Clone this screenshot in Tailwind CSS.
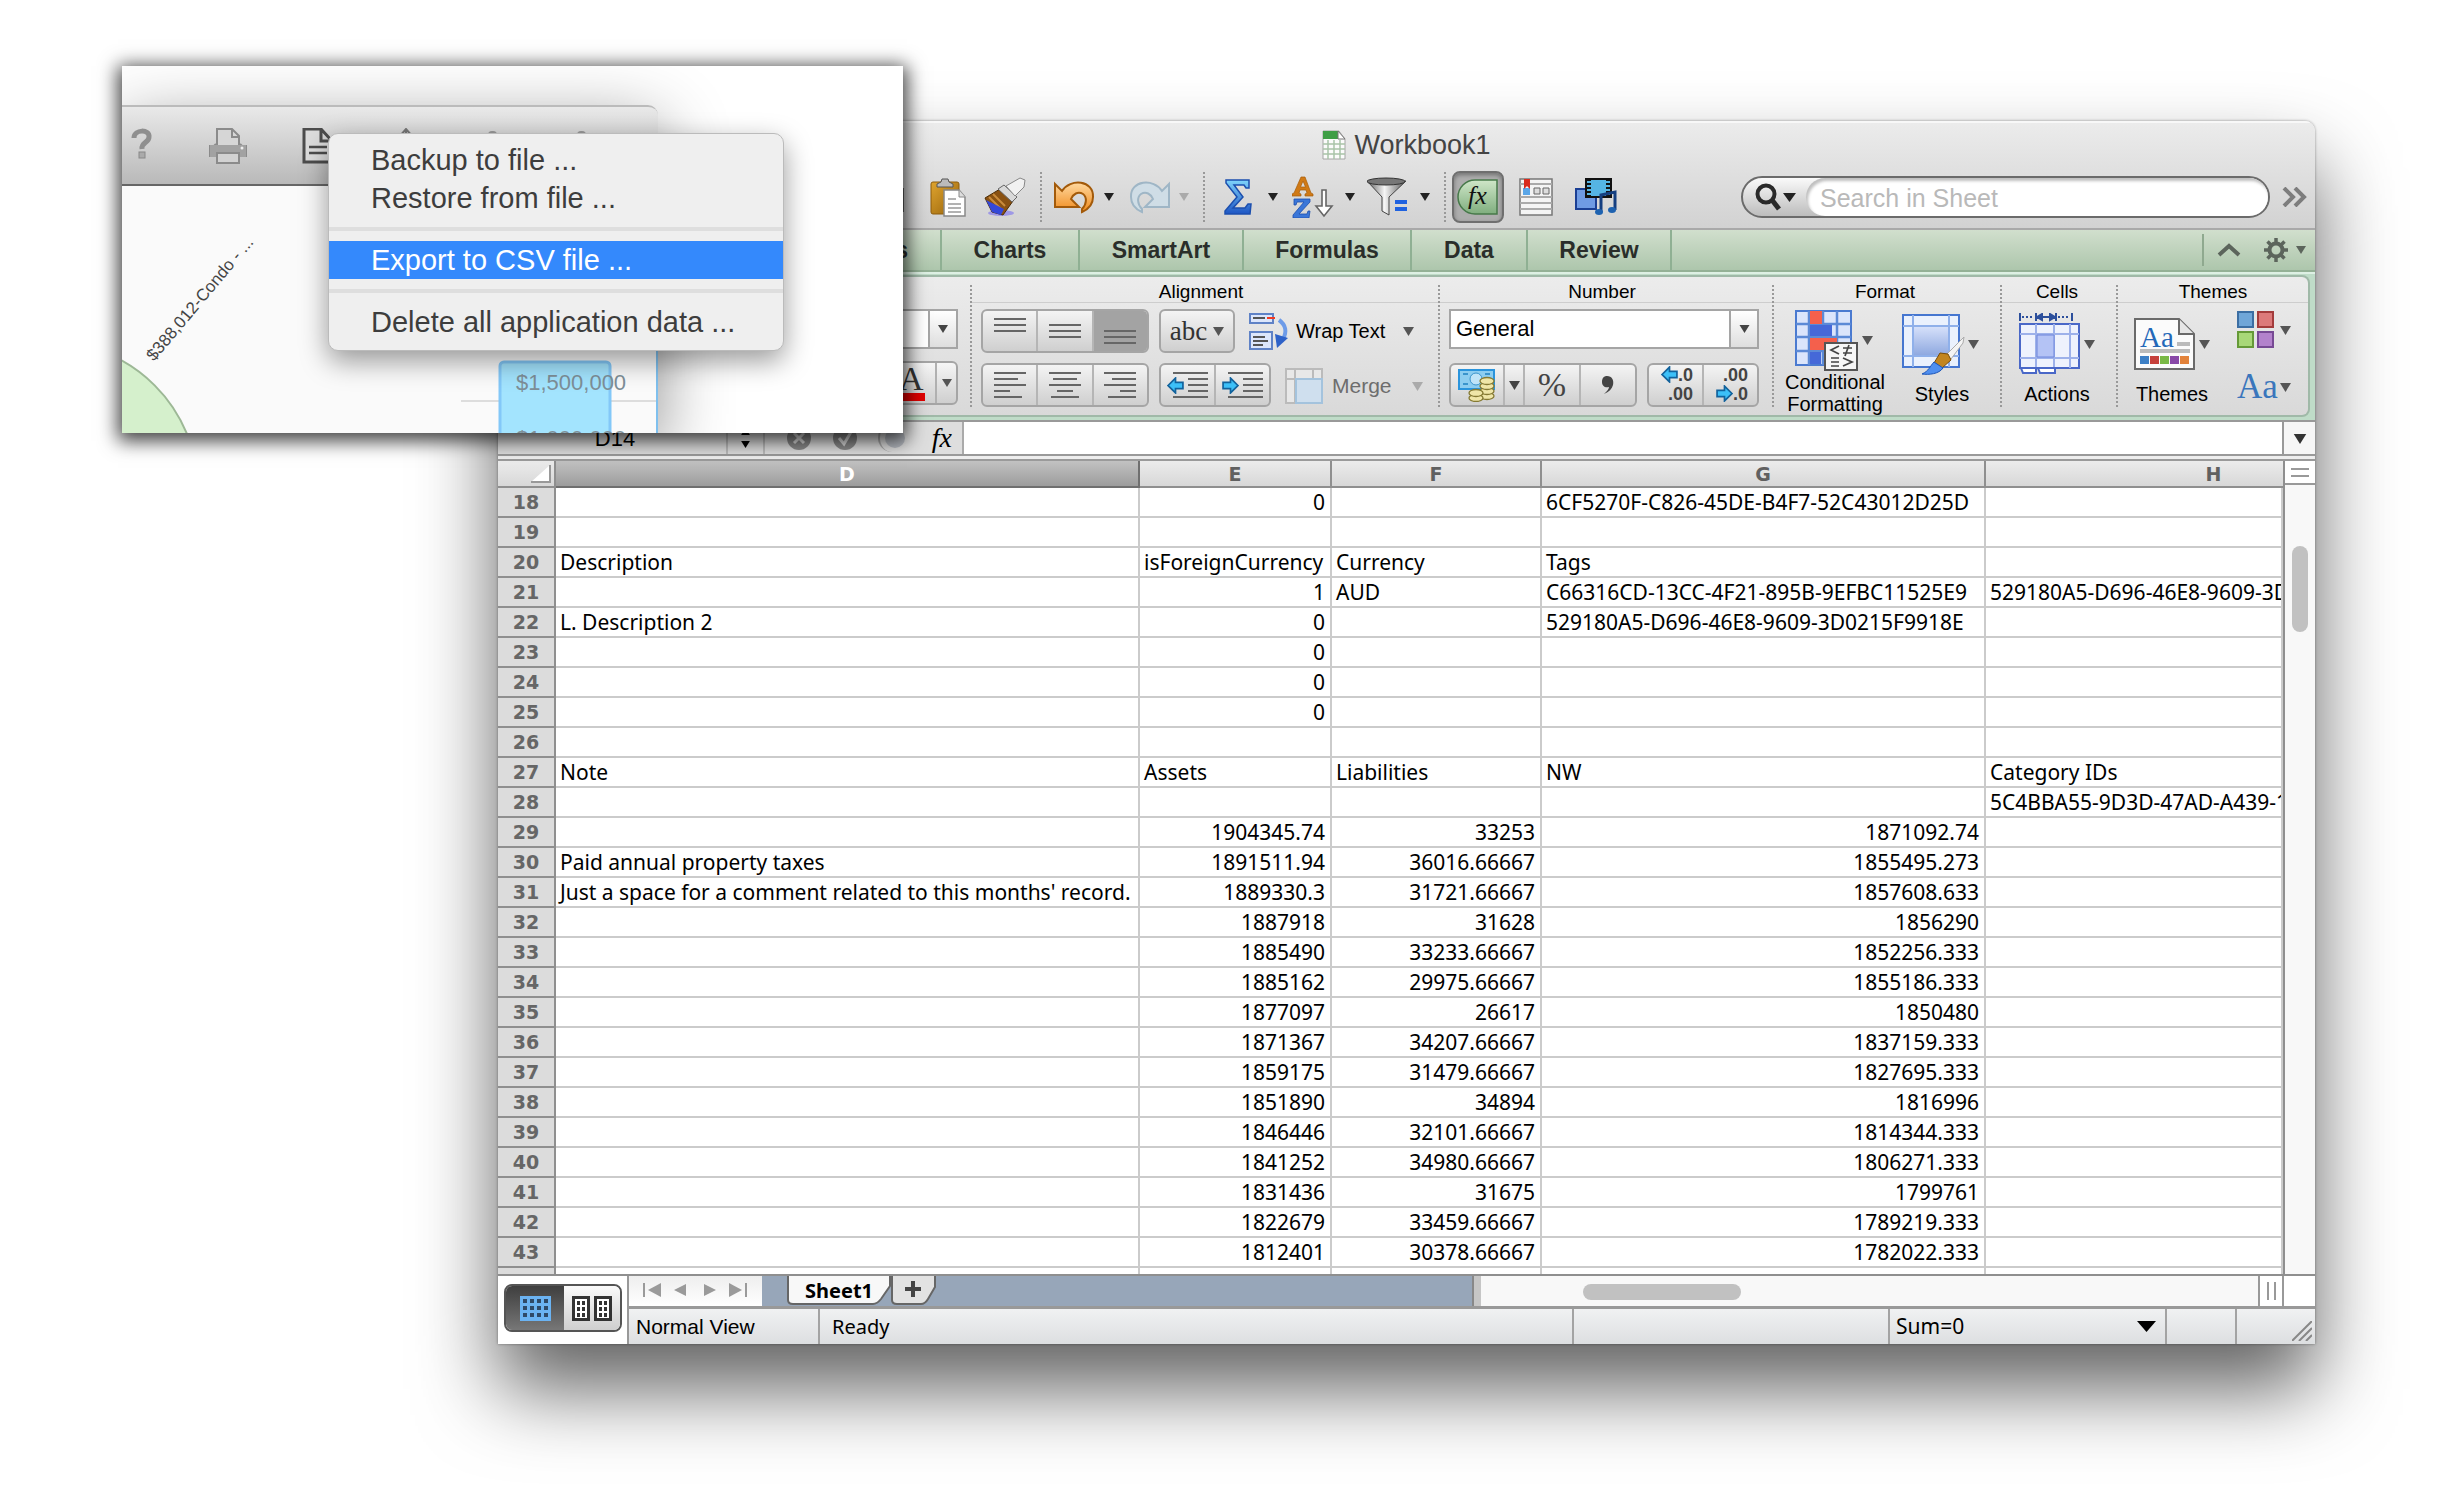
<!DOCTYPE html>
<html lang="en">
<head>
<meta charset="utf-8">
<title>Workbook1</title>
<script src="https://cdn.jsdelivr.net/npm/@tailwindcss/browser@4"></script>
</head>
<body class="relative min-h-screen overflow-x-hidden bg-white pt-[121px] pr-[131px] pb-[164px] pl-[498px] font-['Liberation_Sans',sans-serif] text-black">

<svg class="absolute h-0 w-0" aria-hidden="true">
  <defs>
    <symbol id="caret" viewBox="0 0 10 8"><path d="M0 0h10L5 8z" fill="currentColor"/></symbol>
    <linearGradient id="gOrange" x1="0" y1="0" x2="0" y2="1"><stop offset="0" stop-color="#ffd9a0"/><stop offset="1" stop-color="#f08a1c"/></linearGradient>
    <linearGradient id="gBlue" x1="0" y1="0" x2="0" y2="1"><stop offset="0" stop-color="#7fd4fb"/><stop offset="1" stop-color="#1d55c4"/></linearGradient>
    <linearGradient id="gSteel" x1="0" y1="0" x2="1" y2="0"><stop offset="0" stop-color="#5c5c5c"/><stop offset=".45" stop-color="#f6f6f6"/><stop offset="1" stop-color="#555"/></linearGradient>
    <linearGradient id="gClip" x1="0" y1="0" x2="1" y2="1"><stop offset="0" stop-color="#e0a52f"/><stop offset="1" stop-color="#95610a"/></linearGradient>
    <linearGradient id="gGreen" x1="0" y1="0" x2="0" y2="1"><stop offset="0" stop-color="#cfe6c8"/><stop offset="1" stop-color="#7fae7e"/></linearGradient>
    <linearGradient id="gCell" x1="0" y1="0" x2="0" y2="1"><stop offset="0" stop-color="#d5e0fa"/><stop offset="1" stop-color="#8fa9e0"/></linearGradient>
    <symbol id="arrowL" viewBox="0 0 16 16"><path d="M1 8l7-7v4h7v6H8v4z" fill="#3cc0f8" stroke="#12629c" stroke-width="1.6"/></symbol>
    <symbol id="arrowR" viewBox="0 0 16 16"><path d="M15 8L8 1v4H1v6h7v4z" fill="#3cc0f8" stroke="#12629c" stroke-width="1.6"/></symbol>
  </defs>
</svg>

<main class="overflow-hidden rounded-t-[10px] bg-white shadow-[0_0_3px_rgba(0,0,0,0.4),0_45px_80px_rgba(0,0,0,0.62)]">

  <header class="h-[109px] border-b-2 border-[#a9a9a9] bg-linear-to-b from-[#ececec] to-[#d2d2d2] shadow-[inset_0_2px_0_#f8f8f8]">
    <h1 class="flex h-[48px] items-center justify-center gap-2 text-[27px] leading-[30px] text-[#444]">
      <svg class="h-[30px] w-[24px]" viewBox="0 0 24 30"><path d="M1 1h16l6 8v20H1z" fill="#fbfbfb" stroke="#a5a5a5"/><path d="M1 1h15v8H1z" fill="#3f9e46"/><path d="M16 1l7 8h-7z" fill="#fff" stroke="#777"/><path d="M1 14h22M1 19h22M1 24h22M6 10v19M12 10v19M18 10v19" stroke="#a9c4a8" stroke-width="1.5"/></svg>
      Workbook1
    </h1>
    <div class="flex h-[56px] items-center pl-[392px]">
      <button aria-label="Copy" class="w-[40px]"><svg class="h-[40px] w-[15px]" viewBox="0 0 15 40"><path d="M0 12h13v22H0" fill="#fff" stroke="#666" stroke-width="2"/></svg></button>
      <button aria-label="Paste" class="w-[54px]"><svg class="h-[40px] w-[36px]" viewBox="0 0 36 40"><rect x="1" y="5" width="28" height="32" rx="2" fill="url(#gClip)" stroke="#8d5c0c"/><path d="M7 10V7l4-2 1-3h6l1 3 4 2v3z" fill="#bbb" stroke="#555"/><path d="M14 13h15l6 7v19H14z" fill="#fff" stroke="#888" stroke-width="1.5"/><path d="M29 13v7h6" fill="#ddd" stroke="#888"/><path d="M18 22h8M18 27h13M18 31h13M18 35h13" stroke="#999" stroke-width="1.6"/></svg></button>
      <button aria-label="Format painter" class="w-[56px]"><svg class="h-[40px] w-[42px]" viewBox="0 0 42 40"><ellipse cx="17" cy="36" rx="13" ry="3" fill="#7a6ff0" opacity=".6"/><path d="M1 21l15-9 13 12-10 14-11-3z" fill="#8a5212" stroke="#4d2d06"/><path d="M5 20l12 12M9 17l12 12" stroke="#c98b3b" stroke-width="2"/><path d="M2 23l18 9-3 6-9-3z" fill="#3448d8"/><path d="M14 12l6-4 13 12-5 5z" fill="#d9d9d9" stroke="#666"/><path d="M22 9L36 1l5 2-1 7-9 9z" fill="#f1f1f1" stroke="#888"/></svg></button>
      <span class="h-[50px] w-[13px] border-l-2 border-dotted border-[#999]"></span>
      <button aria-label="Undo" class="w-[51px]"><svg class="h-[34px] w-[42px]" viewBox="0 0 42 34"><path d="M2 4l7 7C17-2 41 0 40 17c0 8-4 12-11 15v-3c5-5 5-12 1-15-5-3-10 0-12 5l8 8H2z" fill="url(#gOrange)" stroke="#a35a0a" stroke-width="2"/></svg></button>
      <svg class="h-[8px] w-[10px] text-[#222]"><use href="#caret"/></svg>
      <button aria-label="Redo" class="ml-[15px] w-[50px]"><svg class="h-[34px] w-[42px]" viewBox="0 0 42 34"><path d="M40 4l-7 7C25-2 1 0 2 17c0 8 4 12 11 15v-3c-5-5-5-12-1-15 5-3 10 0 12 5l-8 8h24z" fill="#cfdde6" stroke="#9fb6c6" stroke-width="2"/></svg></button>
      <svg class="h-[8px] w-[10px] text-[#aaa]"><use href="#caret"/></svg>
      <span class="ml-[14px] h-[50px] w-[21px] border-l-2 border-dotted border-[#999]"></span>
      <button aria-label="AutoSum" class="w-[44px]"><svg class="h-[36px] w-[28px]" viewBox="0 0 28 36"><path d="M2 1h23v8h-3l-2-3H10l9 12-10 11h12l3-4h3l-1 10H1v-3l12-14L2 4z" fill="url(#gBlue)" stroke="#1c4fae" stroke-width="1.5"/></svg></button>
      <svg class="h-[8px] w-[10px] text-[#222]"><use href="#caret"/></svg>
      <button aria-label="Sort" class="ml-[14px] w-[53px]"><svg class="h-[42px] w-[42px]" viewBox="0 0 42 42"><path fill-rule="evenodd" d="M0 20v-2l2-1L9 1h4l6 16 2 1v2h-8v-2l2-1-1-3H8l-1 3 2 1v2zM8.500 11h5L11 5z" fill="#d07a16" stroke="#a85b08" stroke-width=".7"/><path d="M2 23h16v3L7 38h8l1-3h2l-1 7H1v-3l11-13H5l-1 3H2z" fill="#3a76d8" stroke="#1c4fae" stroke-width=".8"/><path d="M30 14h4v16h6l-8 10-8-10h6z" fill="#fff" stroke="#666" stroke-width="1.6"/></svg></button>
      <svg class="h-[8px] w-[10px] text-[#222]"><use href="#caret"/></svg>
      <button aria-label="Filter" class="ml-[11px] w-[54px]"><svg class="h-[40px] w-[42px]" viewBox="0 0 42 40"><path d="M1 4l15 16v14l7 4V20L40 4z" fill="url(#gSteel)" stroke="#444"/><ellipse cx="20" cy="4.500" rx="19" ry="3.500" fill="#777" stroke="#333"/><path d="M29 25h12M29 32h12" stroke="#1f62e0" stroke-width="4"/></svg></button>
      <svg class="h-[8px] w-[10px] text-[#222]"><use href="#caret"/></svg>
      <span class="ml-[14px] h-[50px] w-[8px] border-l-2 border-dotted border-[#999]"></span>
      <button aria-label="Formula builder" class="flex h-[52px] w-[52px] items-center justify-center rounded-lg border-2 border-[#6f6f6f] bg-[#adadad] shadow-[inset_0_2px_4px_rgba(0,0,0,0.35)]"><svg class="h-[36px] w-[42px]" viewBox="0 0 42 36"><path d="M18 1h22v34H18a17 17 0 010-34z" fill="url(#gGreen)" stroke="#47794a" stroke-width="1.5"/><text x="11" y="25" font-family="Liberation Serif, serif" font-style="italic" font-size="26" fill="#111">fx</text></svg></button>
      <button aria-label="Toolbox" class="ml-[15px] w-[56px]"><svg class="h-[38px] w-[34px]" viewBox="0 0 34 38"><rect x="1" y="1" width="32" height="36" fill="#f4f4f4" stroke="#777" stroke-width="1.5"/><path d="M1 6h32M1 19h32M1 25h32M1 31h32" stroke="#aaa" stroke-width="2"/><path d="M4 10h7v7H4z" fill="#5aa6e8"/><path d="M5 1h6v10l-3-3-3 3z" fill="#d92a1c"/><path d="M15 10h6v6h-6zM24 10h6v6h-6z" fill="#ddd" stroke="#666"/></svg></button>
      <button aria-label="Media browser"><svg class="h-[38px] w-[42px]" viewBox="0 0 42 38"><rect x="1" y="11" width="20" height="20" fill="#6f9be4" stroke="#1b3f94" stroke-width="2"/><rect x="11" y="1" width="25" height="18" fill="#55b4e4" stroke="#111" stroke-width="2"/><path d="M14 1v18M33 1v18" stroke="#111" stroke-width="4" stroke-dasharray="2 2"/><path d="M26 34V17l14-3v18" fill="none" stroke="#153f80" stroke-width="3"/><ellipse cx="24" cy="34" rx="4" ry="3" fill="#1e62b0"/><ellipse cx="37" cy="32" rx="4" ry="3" fill="#1e62b0"/></svg></button>
      <div class="mr-[12px] ml-auto flex h-[42px] w-[529px] items-center rounded-full border-2 border-[#6b6b6b] bg-linear-to-b from-[#fafafa] to-[#bdbdbd]">
        <label for="q" class="flex w-[63px] items-center gap-[2px] pl-[12px]"><svg class="h-[28px] w-[26px]" viewBox="0 0 26 28"><circle cx="11" cy="11" r="8.500" fill="none" stroke="#2a2a2a" stroke-width="4"/><path d="M17 17l7 9" stroke="#2a2a2a" stroke-width="5"/></svg><svg class="h-[9px] w-[13px] text-[#222]" viewBox="0 0 10 8" preserveAspectRatio="none"><path d="M0 0h10L5 8z" fill="currentColor"/></svg></label>
        <input id="q" type="search" placeholder="Search in Sheet" class="h-[38px] min-w-0 flex-1 rounded-full bg-white pt-[2px] pl-[14px] text-[25px] shadow-[inset_2px_3px_3px_rgba(0,0,0,0.25)] outline-none placeholder:text-[#b9b9b9]">
      </div>
      <button aria-label="More" class="mr-[6px] w-[27px]"><svg class="h-[20px] w-[26px]" viewBox="0 0 26 20"><path d="M2 1l9 9-9 9M13 1l9 9-9 9" fill="none" stroke="#7d7d7d" stroke-width="4"/></svg></button>
    </div>
  </header>

  <nav class="flex h-[42px] items-stretch border-b-2 border-[#94b196] bg-linear-to-b from-[#d1dfcd] to-[#adc6ac] text-[23px] leading-[40px] font-bold text-[#2a2e2a]">
    <a href="#" class="w-[444px] border-r-2 border-[#8fb093] pr-[32px] text-right">Tables</a>
    <a href="#" class="w-[138px] border-r-2 border-[#8fb093] text-center">Charts</a>
    <a href="#" class="w-[164px] border-r-2 border-[#8fb093] text-center">SmartArt</a>
    <a href="#" class="w-[168px] border-r-2 border-[#8fb093] text-center">Formulas</a>
    <a href="#" class="w-[116px] border-r-2 border-[#8fb093] text-center">Data</a>
    <a href="#" class="w-[144px] border-r-2 border-[#8fb093] text-center">Review</a>
    <div class="my-1 ml-auto flex items-center border-l-2 border-[#8fa98f] pr-[9px] pl-[13px] text-[#5c655c]">
      <button aria-label="Collapse ribbon"><svg class="h-[14px] w-[24px]" viewBox="0 0 24 14"><path d="M2 12L12 3l10 9" fill="none" stroke="currentColor" stroke-width="4"/></svg></button>
      <button aria-label="Ribbon settings" class="ml-[23px] flex items-center gap-[8px]"><svg class="h-[24px] w-[24px]" viewBox="0 0 24 24"><circle cx="12" cy="12" r="6.500" fill="none" stroke="currentColor" stroke-width="4"/><path d="M12 0v5M12 19v5M0 12h5M19 12h5M3.500 3.500l4 4M16.500 16.500l4 4M3.500 20.500l4-4M16.500 7.500l4-4" stroke="currentColor" stroke-width="3.500"/></svg><svg class="h-[8px] w-[10px]"><use href="#caret"/></svg></button>
    </div>
  </nav>

  <section class="h-[150px] border-b-2 border-[#999] bg-[#bfdcc8] pt-[3px] pr-[5px] pb-[3px] shadow-[inset_0_2px_0_#def0e4]">
    <div class="flex h-[142px] rounded-r-lg border-y-2 border-r-2 border-[#a0b9a8] bg-linear-to-b from-[#ececec] to-[#d9d9d9] text-[20px] leading-[22px]">

      <div class="flex w-[472px] shrink-0 flex-col items-end gap-[12px] pt-[32px] pr-[12px]">
        <div class="flex h-[40px] w-[100px] border-2 border-[#a5a5a5] bg-white"><button aria-label="Font size" class="ml-auto flex w-[28px] items-center justify-center border-l-2 border-[#a5a5a5] bg-linear-to-b from-white to-[#dedede] text-[#444]"><svg class="h-[8px] w-[10px]"><use href="#caret"/></svg></button></div>
        <div class="flex h-[44px] rounded-md border-2 border-[#a5a5a5] bg-linear-to-b from-[#f6f6f6] to-[#cfcfcf]">
          <button class="w-[44px] pl-[8px] text-left"><span class="block w-[26px] border-b-8 border-[#e00000] font-['Liberation_Serif',serif] text-[34px] leading-[28px] text-[#333]">A</span></button>
          <button aria-label="Font colour options" class="flex w-[21px] items-center justify-center border-l-2 border-[#b0b0b0] text-[#555]"><svg class="h-[8px] w-[10px]"><use href="#caret"/></svg></button>
        </div>
      </div>

      <div class="my-2 flex w-[468px] shrink-0 flex-col border-l-2 border-dotted border-[#999]">
        <h2 class="-mt-1 h-[22px] border-b border-[#cdcdcd] pr-[8px] text-center text-[19px]">Alignment</h2>
        <div class="mt-[6px] flex items-center pl-[9px]">
          <div class="flex h-[44px] w-[168px] divide-x-2 divide-[#b5b5b5] overflow-hidden rounded-md border-2 border-[#a5a5a5] bg-linear-to-b from-[#f4f4f4] to-[#cfcfcf]">
            <button aria-label="Align top" class="flex flex-1 justify-center pt-[6px]"><svg class="h-[18px] w-[32px]" viewBox="0 0 32 18"><path d="M0 2h32M0 8h32M0 14h32" stroke="#666" stroke-width="2"/></svg></button>
            <button aria-label="Align middle" class="flex flex-1 justify-center pt-[12px]"><svg class="h-[18px] w-[32px]" viewBox="0 0 32 18"><path d="M0 2h32M0 8h32M0 14h32" stroke="#666" stroke-width="2"/></svg></button>
            <button aria-label="Align bottom" class="flex flex-1 justify-center bg-[#a3a3a3] pt-[18px]"><svg class="h-[18px] w-[32px]" viewBox="0 0 32 18"><path d="M0 2h32M0 8h32M0 14h32" stroke="#666" stroke-width="2"/></svg></button>
          </div>
          <button class="ml-[10px] flex h-[44px] w-[76px] items-center justify-center gap-[6px] rounded-md border-2 border-[#a5a5a5] bg-linear-to-b from-[#f4f4f4] to-[#cfcfcf] font-['Liberation_Serif',serif] text-[27px] text-[#333]">abc<svg class="h-[9px] w-[11px] text-[#555]"><use href="#caret"/></svg></button>
          <button class="ml-[14px] flex items-center gap-[7px]"><svg class="h-[38px] w-[40px]" viewBox="0 0 40 38"><path d="M1 2h23v9H1zM1 20h22v17H1z" fill="#dce6fb" stroke="#5f82c6" stroke-width="2"/><path d="M4 6h12M4 25h12M4 29h15M4 33h10" stroke="#555" stroke-width="2"/><path d="M18 6h8" stroke="#f23a22" stroke-width="2"/><path d="M30 8c7 5 8 12 4 19" fill="none" stroke="#6d9be8" stroke-width="4"/><path d="M26 22l13 4-11 10z" fill="#2e62c8"/></svg>Wrap Text<svg class="ml-[11px] h-[9px] w-[11px] text-[#555]"><use href="#caret"/></svg></button>
        </div>
        <div class="mt-[10px] flex items-center pl-[9px]">
          <div class="flex h-[44px] w-[168px] divide-x-2 divide-[#b5b5b5] rounded-md border-2 border-[#a5a5a5] bg-linear-to-b from-[#f4f4f4] to-[#cfcfcf]">
            <button aria-label="Align left" class="flex flex-1 items-center justify-center"><svg class="h-[28px] w-[32px]" viewBox="0 0 32 28"><path d="M0 2h32M0 8h24M0 14h32M0 20h16M0 26h28" stroke="#666" stroke-width="2"/></svg></button>
            <button aria-label="Align centre" class="flex flex-1 items-center justify-center"><svg class="h-[28px] w-[32px]" viewBox="0 0 32 28"><path d="M0 2h32M4 8h24M0 14h32M8 20h16M2 26h28" stroke="#666" stroke-width="2"/></svg></button>
            <button aria-label="Align right" class="flex flex-1 items-center justify-center"><svg class="h-[28px] w-[32px]" viewBox="0 0 32 28"><path d="M0 2h32M8 8h24M0 14h32M16 20h16M4 26h28" stroke="#666" stroke-width="2"/></svg></button>
          </div>
          <div class="ml-[10px] flex h-[44px] w-[112px] divide-x-2 divide-[#b5b5b5] rounded-md border-2 border-[#a5a5a5] bg-linear-to-b from-[#f4f4f4] to-[#cfcfcf]">
            <button aria-label="Decrease indent" class="flex flex-1 items-center justify-center"><svg class="h-[28px] w-[42px]" viewBox="0 0 42 28"><path d="M6 2h35M21 8h20M21 14h20M21 20h20M6 26h35" stroke="#666" stroke-width="2"/><use href="#arrowL" x="0" y="6" width="17" height="17"/></svg></button>
            <button aria-label="Increase indent" class="flex flex-1 items-center justify-center"><svg class="h-[28px] w-[42px]" viewBox="0 0 42 28"><path d="M6 2h35M21 8h20M21 14h20M21 20h20M6 26h35" stroke="#666" stroke-width="2"/><use href="#arrowR" x="0" y="6" width="17" height="17"/></svg></button>
          </div>
          <button class="ml-[14px] flex items-center gap-[9px] pt-[2px] text-[21px] text-[#6d6d6d]"><svg class="h-[36px] w-[38px]" viewBox="0 0 38 36"><rect x="1" y="1" width="36" height="34" fill="#e8e8e8" stroke="#bbb" stroke-width="2"/><path d="M10 1v34M28 1v10M1 11h36" stroke="#bbb" stroke-width="2"/><rect x="11" y="11" width="26" height="24" fill="#cfdfee" stroke="#a4c3dd" stroke-width="2"/></svg>Merge<svg class="ml-[11px] h-[9px] w-[11px] text-[#aaa]"><use href="#caret"/></svg></button>
        </div>
      </div>

      <div class="my-2 flex w-[334px] shrink-0 flex-col border-l-2 border-dotted border-[#999]">
        <h2 class="-mt-1 h-[22px] border-b border-[#cdcdcd] pr-[8px] text-center text-[19px]">Number</h2>
        <div class="relative mt-[6px] ml-[9px] w-[310px]">
          <select aria-label="Number format" class="block h-[40px] w-full appearance-none border-2 border-[#a5a5a5] bg-white pl-[5px] text-[22px] leading-[22px]"><option>General</option></select>
          <span class="pointer-events-none absolute inset-y-[2px] right-[2px] flex w-[28px] items-center justify-center border-l-2 border-[#a5a5a5] bg-linear-to-b from-white to-[#dedede] text-[#444]"><svg class="h-[8px] w-[11px]"><use href="#caret"/></svg></span>
        </div>
        <div class="mt-[14px] ml-[9px] flex gap-[10px] text-[#444]">
          <div class="flex h-[44px] w-[188px] divide-x-2 divide-[#b5b5b5] rounded-md border-2 border-[#a5a5a5] bg-linear-to-b from-[#f4f4f4] to-[#cfcfcf]">
            <button aria-label="Currency" class="flex w-[54px] items-center justify-center"><svg class="h-[34px] w-[38px]" viewBox="0 0 38 34"><rect x="1" y="2" width="35" height="19" fill="#8ccdf0" stroke="#2a94dc" stroke-width="2"/><circle cx="18" cy="11" r="6" fill="#bfe4f8" stroke="#3a94cc"/><path d="M5 6h5M5 16h5M27 6h5" stroke="#3a94cc" stroke-width="2"/><g fill="#efe6a8" stroke="#857a33" stroke-width="1.300"><ellipse cx="29" cy="28" rx="7" ry="3.500"/><ellipse cx="29" cy="23" rx="7" ry="3.500"/><ellipse cx="29" cy="18" rx="7" ry="3.500"/><ellipse cx="29" cy="13" rx="7" ry="3.500"/><ellipse cx="18" cy="30" rx="7" ry="3.500"/><ellipse cx="18" cy="25" rx="7" ry="3.500"/></g></svg></button>
            <button aria-label="Currency options" class="flex w-[20px] items-center justify-center"><svg class="h-[9px] w-[11px]"><use href="#caret"/></svg></button>
            <button class="w-[56px] font-['Liberation_Serif',serif] text-[34px]">%</button>
            <button aria-label="Comma style" class="flex flex-1 items-center justify-center"><svg class="h-[20px] w-[14px]" viewBox="0 0 14 20"><path d="M6 1c5 0 7 4 6 9-1 4-4 7-9 9 3-3 5-5 5-7-4 1-7-1-7-5 0-4 2-6 5-6z" fill="#444"/></svg></button>
          </div>
          <div class="flex h-[44px] w-[112px] divide-x-2 divide-[#b5b5b5] rounded-md border-2 border-[#a5a5a5] bg-linear-to-b from-[#f4f4f4] to-[#cfcfcf] text-[18px] leading-[19px] font-bold">
            <button class="flex flex-1 flex-col items-end justify-center pr-[9px]"><span class="flex"><svg class="h-[17px] w-[17px]"><use href="#arrowL"/></svg>.0</span><span>.00</span></button>
            <button class="flex flex-1 flex-col items-end justify-center pr-[9px]"><span>.00</span><span class="flex"><svg class="h-[17px] w-[17px]"><use href="#arrowR"/></svg>.0</span></button>
          </div>
        </div>
      </div>

      <div class="my-2 flex w-[228px] shrink-0 flex-col border-l-2 border-dotted border-[#999]">
        <h2 class="-mt-1 h-[22px] border-b border-[#cdcdcd] pr-[4px] text-center text-[19px]">Format</h2>
        <div class="mt-[6px] flex">
          <button class="flex w-[122px] flex-col items-center text-[20px] leading-[22px]">
            <span class="flex items-center gap-[2px] pr-[4px] text-[#555]"><svg class="h-[62px] w-[66px]" viewBox="0 0 66 62"><rect x="2" y="2" width="55" height="54" fill="#dbe5fb" stroke="#4a7ad0" stroke-width="2"/><path d="M2 15h55M2 28h55M2 42h55M15 2v54M29 2v54M43 2v54" stroke="#5c8ad6" stroke-width="2.500"/><path d="M16 2h12v13H16zM16 29h27v12H16z" fill="#f4604c"/><path d="M16 16h22v11H16zM16 43h11v12H16z" fill="#4568d8"/><rect x="31" y="34" width="32" height="27" fill="#f6f6f6" stroke="#555" stroke-width="2"/><path d="M45 37l-8 4 8 4M37 49h8M37 53h8M37 57h8M49 39h9M49 44h9M55 36l-4 11M49 49l9 4-9 4" fill="none" stroke="#444" stroke-width="1.700"/></svg><svg class="h-[9px] w-[11px]"><use href="#caret"/></svg></span>
            <span class="block whitespace-nowrap">Conditional<br>Formatting</span>
          </button>
          <button class="flex w-[96px] flex-col items-center">
            <span class="flex items-center gap-[1px] pt-[4px] pr-[8px] text-[#555]"><svg class="h-[62px] w-[66px]" viewBox="0 0 66 62"><rect x="2" y="2" width="56" height="52" fill="#eaf1fd" stroke="#4576d0" stroke-width="2"/><path d="M2 13h56M2 43h56M12 2v52M48 2v52" stroke="#8fb0ea" stroke-width="2"/><path d="M13 14h34v28H13z" fill="url(#gCell)"/><path d="M63 24L45 42l5 4 12-16z" fill="#f4f4f4" stroke="#aaa"/><path d="M39 40l8 1 3 6-9 8-8-5z" fill="#c2851f" stroke="#7a4d08"/><path d="M33 49l9 6c-4 6-14 7-21 6 7-3 8-8 12-12z" fill="#4f8ff0" stroke="#1b55b8"/></svg><svg class="h-[9px] w-[11px]"><use href="#caret"/></svg></span>
            <span class="mt-[8px] mr-[4px]">Styles</span>
          </button>
        </div>
      </div>

      <div class="my-2 flex w-[116px] shrink-0 flex-col border-l-2 border-dotted border-[#999]">
        <h2 class="-mt-1 h-[22px] border-b border-[#cdcdcd] pr-[4px] text-center text-[19px]">Cells</h2>
        <button class="mt-[6px] flex flex-col items-center">
          <span class="flex items-center gap-[1px] pt-[4px] pr-[6px] text-[#555]"><svg class="h-[62px] w-[66px]" viewBox="0 0 66 62"><path d="M3 0v8M55 0v8M19 4h20M19 0v8M39 0v8M20 4l5-3v6zM38 4l-5-3v6z" stroke="#2c4f9c" stroke-width="2" fill="#2c4f9c"/><path d="M5 4h12M41 4h12" stroke="#2c4f9c" stroke-width="2" stroke-dasharray="2 2"/><rect x="3" y="11" width="59" height="44" fill="#eef2fd" stroke="#4a68c8" stroke-width="2"/><path d="M3 21h59M3 45h59M19 11v44M37 11v44M53 11v44" stroke="#9db1ea" stroke-width="2"/><path d="M20 22h17v22H20z" fill="#b4c3f5" stroke="#6f86dc"/><path d="M4 55h15v5H6zM21 55h17v5H23z" fill="#fff" stroke="#4a68c8" stroke-width="2"/></svg><svg class="h-[9px] w-[11px]"><use href="#caret"/></svg></span>
          <span class="mt-[8px] mr-[4px]">Actions</span>
        </button>
      </div>

      <div class="my-2 flex min-w-0 flex-1 flex-col border-l-2 border-dotted border-[#999]">
        <h2 class="-mt-1 h-[22px] border-b border-[#cdcdcd] text-center text-[19px]">Themes</h2>
        <div class="mt-[6px] flex pl-[11px]">
          <button class="flex w-[90px] flex-col items-center">
            <span class="flex items-center gap-[3px] pt-[4px] pr-[6px] text-[#555]"><svg class="h-[62px] w-[64px]" viewBox="0 0 64 62"><path d="M3 6h44l15 15v35H3z" fill="#fbfbfb" stroke="#6a6a6a" stroke-width="2"/><path d="M47 6v15h15" fill="#e6e6e6" stroke="#6a6a6a" stroke-width="2"/><text x="8" y="34" font-family="Liberation Serif, serif" font-size="29" fill="#2468b8">Aa</text><path d="M45 31h13M8 38h50" stroke="#bbb" stroke-width="4"/><path d="M8 43h9v8H8z" fill="#3d80c6"/><path d="M18 43h9v8h-9z" fill="#c6403c"/><path d="M28 43h9v8h-9z" fill="#79b845"/><path d="M38 43h9v8h-9z" fill="#8848a8"/><path d="M48 43h9v8h-9z" fill="#e2823a"/></svg><svg class="h-[9px] w-[11px]"><use href="#caret"/></svg></span>
            <span class="mt-[8px] mr-[4px]">Themes</span>
          </button>
          <div class="ml-[18px] flex flex-col gap-[20px] pt-[2px] text-[#555]">
            <button aria-label="Theme colours" class="flex items-center gap-[5px]"><svg class="h-[38px] w-[38px]" viewBox="0 0 38 38"><g stroke-width="2"><path d="M1 1h15v15H1z" fill="#6fa6d8" stroke="#3b6ea3"/><path d="M21 1h15v15H21z" fill="#dc7a7a" stroke="#a33c3c"/><path d="M1 21h15v15H1z" fill="#a8d878" stroke="#659a38"/><path d="M21 21h15v15H21z" fill="#b382cc" stroke="#774a94"/></g></svg><svg class="h-[9px] w-[11px]"><use href="#caret"/></svg></button>
            <button aria-label="Theme fonts" class="flex items-center gap-[2px] font-['Liberation_Serif',serif] text-[35px] leading-[36px] text-[#3a76bc]">Aa<svg class="h-[9px] w-[11px] text-[#555]"><use href="#caret"/></svg></button>
          </div>
        </div>
      </div>
    </div>
  </section>

  <div class="flex h-[34px] border-b-2 border-[#9a9a9a] bg-[#dedede]">
    <input aria-label="Name box" value="D14" class="w-[230px] border-r-2 border-[#bbb] pr-[14px] pl-[20px] text-center text-[22px] outline-none">
    <button aria-label="Select name" class="flex w-[37px] flex-col items-center justify-center gap-[6px] border-r-2 border-[#bbb]"><svg class="h-[7px] w-[9px] rotate-180"><use href="#caret"/></svg><svg class="h-[7px] w-[9px]"><use href="#caret"/></svg></button>
    <div class="flex w-[197px] items-center gap-[20px] pl-[21px]">
      <button aria-label="Cancel"><svg class="h-[26px] w-[26px]" viewBox="0 0 26 26"><circle cx="13" cy="13" r="12" fill="#8a8a8a"/><path d="M8 8l10 10M18 8L8 18" stroke="#ddd" stroke-width="3"/></svg></button>
      <button aria-label="Enter"><svg class="h-[26px] w-[26px]" viewBox="0 0 26 26"><circle cx="13" cy="13" r="12" fill="#8a8a8a"/><path d="M7 13l5 6 7-12" fill="none" stroke="#ddd" stroke-width="3"/></svg></button>
      <button aria-label="Formula builder" class="flex h-[28px] w-[74px] items-center justify-between rounded-l-full border-l-2 border-[#aaa] pl-[5px] font-['Liberation_Serif',serif] text-[28px] leading-[26px] italic"><span class="h-[20px] w-[20px] rounded-full bg-[#b5b9c0]"></span>fx</button>
    </div>
    <input aria-label="Formula" class="min-w-0 flex-1 border-l-2 border-[#aaa] bg-white outline-none">
    <button aria-label="Expand formula bar" class="flex w-[33px] items-center justify-center border-l-2 border-[#999] bg-[#f6f6f6] pt-[2px] text-[#333]"><svg class="h-[10px] w-[14px]"><use href="#caret"/></svg></button>
  </div>
  <div class="h-[5px] border-b-2 border-[#9a9a9a] bg-[#eee]"></div>

  <div class="flex h-[815px] border-b-2 border-[#8f8f8f]">
    <div class="min-w-0 flex-1 overflow-hidden">
      <table class="w-full table-fixed border-separate border-spacing-0 font-['Noto_Sans',sans-serif] text-[21px] leading-[28px] whitespace-nowrap">
        <colgroup><col class="w-[58px]"><col class="w-[584px]"><col class="w-[192px]"><col class="w-[210px]"><col class="w-[444px]"><col></colgroup>
        <thead class="font-['DejaVu_Sans',sans-serif] text-[19px] leading-[24px] text-[#606060]">
          <tr class="h-[27px] bg-linear-to-b from-[#ececec] to-[#d6d6d6]">
            <td class="border-r-2 border-b-2 border-[#8f8f8f] p-0"><svg class="mr-[3px] ml-auto block h-[18px] w-[20px]" viewBox="0 0 20 18"><path d="M19 0v17H0z" fill="#fff"/><path d="M19 0v17H0" fill="none" stroke="#999" stroke-width="2"/></svg></td>
            <th scope="col" class="border-r-2 border-b-2 border-[#6f6f6f] bg-linear-to-b from-[#c2c2c2] to-[#9c9c9c] p-0 text-white">D</th>
            <th scope="col" class="border-r-2 border-b-2 border-[#8f8f8f] p-0">E</th>
            <th scope="col" class="border-r-2 border-b-2 border-[#8f8f8f] p-0">F</th>
            <th scope="col" class="border-r-2 border-b-2 border-[#8f8f8f] p-0">G</th>
            <th scope="col" class="border-b-2 border-[#8f8f8f] p-0 pl-[158px]">H</th>
          </tr>
        </thead>
        <tbody id="rows"></tbody>
      </table>
    </div>
    <div class="w-[32px] border-l-2 border-[#8f8f8f] bg-[#f8f8f8]">
      <div class="flex h-[24px] flex-col items-center justify-center gap-[5px] border-b-2 border-[#999] bg-white"><i class="h-[2px] w-[18px] bg-[#999]"></i><i class="h-[2px] w-[18px] bg-[#999]"></i></div>
      <div class="mt-[61px] ml-[7px] h-[86px] w-[16px] rounded-full bg-[#c1c1c1]"></div>
    </div>
  </div>

  <footer class="flex h-[68px] bg-white text-[20px]">
    <div class="w-[131px] border-r-2 border-[#999] pt-[8px] pl-[6px]">
      <div class="flex h-[48px] w-[118px] overflow-hidden rounded-lg border-2 border-[#555]">
        <button aria-label="Normal view" class="flex w-[58px] items-center justify-center bg-linear-to-b from-[#3f3f3f] to-[#777]"><svg class="h-[25px] w-[31px]" viewBox="0 0 31 25"><rect width="31" height="25" fill="#6bb3f2"/><g fill="#2f4a68"><path d="M3 3h4v4H3zM10 3h4v4h-4zM17 3h4v4h-4zM24 3h4v4h-4zM3 10h4v4H3zM10 10h4v4h-4zM17 10h4v4h-4zM24 10h4v4h-4zM3 17h4v4H3zM10 17h4v4h-4zM17 17h4v4h-4zM24 17h4v4h-4z"/></g></svg></button>
        <button aria-label="Page layout view" class="flex flex-1 items-center justify-center bg-linear-to-b from-[#fafafa] to-[#cfcfcf]"><svg class="h-[25px] w-[40px]" viewBox="0 0 40 25"><path d="M1.500 1.500h15v22h-15zM23.500 1.500h15v22h-15z" fill="#fff" stroke="#333" stroke-width="3"/><path d="M5 5h3v4H5zM10 5h3v4h-3zM5 11h3v4H5zM10 11h3v4h-3zM5 17h3v4H5zM10 17h3v4h-3zM27 5h3v4h-3zM32 5h3v4h-3zM27 11h3v4h-3zM32 11h3v4h-3zM27 17h3v4h-3zM32 17h3v4h-3z" fill="#333"/></svg></button>
      </div>
    </div>
    <div class="flex min-w-0 flex-1 flex-col">
      <div class="flex h-[33px] shrink-0 border-b-[3px] border-[#999]">
        <div class="flex w-[133px] items-center gap-[12px] bg-linear-to-b from-[#eee] to-white pb-[3px] pl-[14px] text-[#9a9a9a]">
          <button aria-label="First sheet"><svg class="h-[14px] w-[19px]" viewBox="0 0 19 14"><path d="M1 0v14" stroke="currentColor" stroke-width="2"/><path d="M18 0v14L5 7z" fill="currentColor"/></svg></button>
          <button aria-label="Previous sheet"><svg class="h-[12px] w-[12px]" viewBox="0 0 12 12"><path d="M12 0v12L0 6z" fill="currentColor"/></svg></button>
          <button aria-label="Next sheet" class="ml-[6px]"><svg class="h-[12px] w-[12px]" viewBox="0 0 12 12"><path d="M0 0v12l12-6z" fill="currentColor"/></svg></button>
          <button aria-label="Last sheet"><svg class="h-[14px] w-[19px]" viewBox="0 0 19 14"><path d="M18 0v14" stroke="currentColor" stroke-width="2"/><path d="M1 0v14l13-7z" fill="currentColor"/></svg></button>
        </div>
        <div class="flex w-[710px] bg-[#97a6b9] pl-[25px]">
          <button class="relative h-[30px] w-[104px] font-['Noto_Sans',sans-serif] text-[20px] leading-[26px] font-bold"><svg class="absolute inset-0 h-[30px] w-[104px]" viewBox="0 0 104 30"><path d="M1-2v26q0 4 5 4h80q4 0 8-5l9-13V-2z" fill="#f8f8f8" stroke="#666" stroke-width="2"/></svg><span class="relative">Sheet1</span></button>
          <button aria-label="Add sheet" class="h-[30px] w-[46px]"><svg class="h-[30px] w-[46px]" viewBox="0 0 46 30"><path d="M1-2v26q0 4 5 4h24q4 0 7-5l7-12V-2z" fill="#e2e2e2" stroke="#666" stroke-width="2"/><path d="M22 5v16M14 13h16" stroke="#444" stroke-width="4"/></svg></button>
        </div>
        <div class="w-[9px] border-l-2 border-[#888] bg-[#c6c6c6]"></div>
        <div class="min-w-0 flex-1 bg-[#f8f8f8] pt-[8px]"><div class="ml-[102px] h-[16px] w-[158px] rounded-full bg-[#c1c1c1]"></div></div>
        <div class="flex w-[26px] items-center justify-center gap-[5px] border-x-2 border-[#999]"><i class="h-[18px] w-[2px] bg-[#999]"></i><i class="h-[18px] w-[2px] bg-[#999]"></i></div>
        <div class="w-[31px]"></div>
      </div>
      <div class="flex min-h-0 flex-1 divide-x-2 divide-[#a3a3a3] bg-linear-to-b from-[#f0f1f2] to-[#dddfe1] leading-[35px]">
        <div class="w-[191px] pl-[7px] text-[21px]">Normal View</div>
        <div class="w-[754px] pl-[12px] font-['Noto_Sans',sans-serif] text-[20px]">Ready</div>
        <div class="min-w-0 flex-1"></div>
        <button class="flex w-[277px] items-center justify-between pr-[9px] pl-[6px] font-['Noto_Sans',sans-serif] text-[21px]">Sum=0<svg class="h-[11px] w-[19px]" viewBox="0 0 19 11"><path d="M0 0h19L9.500 11z"/></svg></button>
        <div class="w-[70px]"></div>
        <div class="flex w-[78px] items-end justify-end pr-[3px] pb-[3px]"><svg class="h-[20px] w-[20px]" viewBox="0 0 20 20"><path d="M0 20L20 0M7 20L20 7M14 20l6-6" stroke="#888" stroke-width="2"/></svg></div>
      </div>
    </div>
  </footer>
</main>

<aside class="absolute top-[66px] left-[122px] h-[367px] w-[781px] bg-white shadow-[0_4px_18px_4px_rgba(0,0,0,0.75)]">
  <div class="relative h-full overflow-hidden">
    <div class="flex h-full flex-col pt-[39px]">
      <div class="flex min-h-0 w-[536px] flex-1 flex-col rounded-tr-[10px] bg-[#fafafa] shadow-[0_20px_70px_rgba(0,0,0,0.45)]">
        <div class="flex h-[81px] shrink-0 items-start rounded-tr-[10px] border-t-2 border-b-2 border-t-[#bbb] border-b-[#666] bg-linear-to-b from-[#e9e9e9] to-[#b9b9b9] pt-[21px] pl-[8px] text-[#8b8b8b]">
          <button aria-label="Help"><svg class="h-[32px] w-[24px]" viewBox="0 0 24 32"><path d="M4 10C4 1 20 1 19 9c0 6-8 5-7 12" fill="none" stroke="#8f8f8f" stroke-width="5"/><rect x="9" y="24" width="6" height="6" fill="#aaa" stroke="#888"/></svg></button>
          <button aria-label="Print" class="ml-[54px]"><svg class="h-[36px] w-[40px]" viewBox="0 0 40 36"><path d="M9 17V1h15l7 7v9M24 1v8h7" fill="#d6d6d6" stroke="#8b8b8b" stroke-width="2"/><path d="M2 29V18h4l2-2M38 29V18h-4l-2-2" fill="none" stroke="#8b8b8b" stroke-width="2"/><path d="M2 17h36v12H2z" fill="#a2a2a2"/><rect x="9" y="25" width="22" height="10" fill="#d2d2d2" stroke="#8b8b8b" stroke-width="2"/><circle cx="34" cy="20" r="1.500" fill="#eee"/></svg></button>
          <button aria-label="File" class="ml-[54px]"><svg class="h-[36px] w-[32px]" viewBox="0 0 32 36"><path d="M2 1h17l11 12v21H2zM19 1v12h11" fill="#ddd" stroke="#4d4d4d" stroke-width="3"/><path d="M7 19h18M7 25h18" stroke="#4d4d4d" stroke-width="2.500"/></svg></button>
          <button aria-label="Share" class="ml-[64px]"><svg class="h-[30px] w-[16px]" viewBox="0 0 16 30"><path d="M2 8l6-7 6 7M8 2v27" fill="none" stroke="#777" stroke-width="2"/></svg></button>
          <button aria-label="Add" class="mt-[3px] ml-[74px] h-[20px] w-[9px] rounded-sm bg-[#999]"></button>
          <button aria-label="Remove" class="mt-[3px] ml-[80px] h-[20px] w-[9px] rounded-sm bg-[#999]"></button>
        </div>
        <svg class="block min-h-0 w-[536px] flex-1 border-r-2 border-[#7fc0ee]" viewBox="0 0 534 247" preserveAspectRatio="xMinYMin slice">
          <circle cx="-72" cy="304" r="148" fill="#d5f0cc" stroke="#9db896" stroke-width="2"/>
          <text transform="translate(32 176) rotate(-50)" font-size="17" fill="#444">$388,012-Condo - ...</text>
          <path d="M339 215h197" stroke="#ddd" stroke-width="2"/>
          <rect x="378" y="176" width="110" height="90" rx="4" fill="#a3e4fe" stroke="#83c8f8" stroke-width="3"/>
          <text x="394" y="204" font-size="22" fill="#7e8f98">$1,500,000</text>
          <text x="394" y="260" font-size="22" fill="#7e8f98">$1,000,000</text>
        </svg>
      </div>
    </div>
    <div role="menu" class="absolute top-[67px] left-[206px] flex h-[218px] w-[456px] flex-col overflow-hidden rounded-[10px] border border-[#bbb] bg-[#efefef] pt-[7px] text-left text-[29px] leading-[38px] text-[#3d3d3d] shadow-[0_10px_28px_rgba(0,0,0,0.4)]">
      <button role="menuitem" class="pl-[42px] text-left">Backup to file ...</button>
      <button role="menuitem" class="pl-[42px] text-left">Restore from file ...</button>
      <hr class="mt-[10px] mb-[10px] border-t-4 border-[#dedede]">
      <button role="menuitem" class="bg-[#3489fc] pl-[42px] text-left text-white">Export to CSV file ...</button>
      <hr class="mt-[10px] mb-[10px] border-t-4 border-[#dedede]">
      <button role="menuitem" class="pl-[42px] text-left">Delete all application data ...</button>
    </div>
  </div>
</aside>

<script>
const data = {
  18: ['', '0', '', '6CF5270F-C826-45DE-B4F7-52C43012D25D', ''],
  20: ['Description', 'isForeignCurrency', 'Currency', 'Tags', ''],
  21: ['', '1', 'AUD', 'C66316CD-13CC-4F21-895B-9EFBC11525E9', '529180A5-D696-46E8-9609-3D0215F9918E'],
  22: ['L. Description 2', '0', '', '529180A5-D696-46E8-9609-3D0215F9918E', ''],
  23: ['', '0'], 24: ['', '0'], 25: ['', '0'],
  27: ['Note', 'Assets', 'Liabilities', 'NW', 'Category IDs'],
  28: ['', '', '', '', '5C4BBA55-9D3D-47AD-A439-1'],
  29: ['', '1904345.74', '33253', '1871092.74'],
  30: ['Paid annual property taxes', '1891511.94', '36016.66667', '1855495.273'],
  31: ["Just a space for a comment related to this months' record.", '1889330.3', '31721.66667', '1857608.633'],
  32: ['', '1887918', '31628', '1856290'],
  33: ['', '1885490', '33233.66667', '1852256.333'],
  34: ['', '1885162', '29975.66667', '1855186.333'],
  35: ['', '1877097', '26617', '1850480'],
  36: ['', '1871367', '34207.66667', '1837159.333'],
  37: ['', '1859175', '31479.66667', '1827695.333'],
  38: ['', '1851890', '34894', '1816996'],
  39: ['', '1846446', '32101.66667', '1814344.333'],
  40: ['', '1841252', '34980.66667', '1806271.333'],
  41: ['', '1831436', '31675', '1799761'],
  42: ['', '1822679', '33459.66667', '1789219.333'],
  43: ['', '1812401', '30378.66667', '1782022.333'],
};
let html = '';
for (let n = 18; n <= 44; n++) {
  html += '<tr class="h-[30px]"><th scope="row" class="border-r-2 border-b-2 border-[#8f8f8f] bg-[#dcdcdc] p-0 font-[\'DejaVu_Sans\',sans-serif] text-[19px] text-[#666]">' + n + '</th>';
  for (let c = 0; c < 5; c++) {
    const v = (data[n] || [])[c] || '';
    const numeric = /^[\d.]+$/.test(v);
    html += '<td class="overflow-hidden border-r-2 border-b-2 border-[#cbcbcb] py-0 pr-[5px] pl-[4px] ' + (numeric ? 'text-right' : 'text-left') + '">' + v + '</td>';
  }
  html += '</tr>';
}
document.getElementById('rows').innerHTML = html;
</script>
</body>
</html>
